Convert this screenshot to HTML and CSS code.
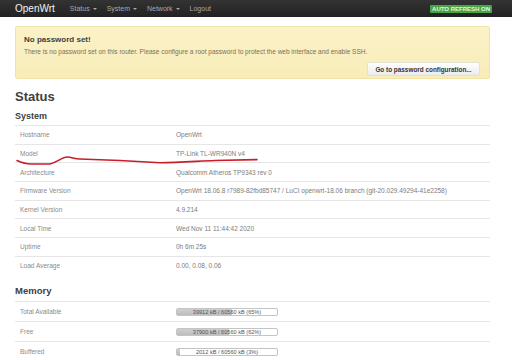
FILE: index.html
```html
<!DOCTYPE html>
<html>
<head>
  <meta charset="UTF-8">
  <title>OpenWrt - Status</title>
  <link rel="stylesheet" href="styles.css">
</head>
<body>
  <header class="navbar">
    <a class="brand" href="#">OpenWrt</a>
    <ul class="nav">
      <li>Status <span class="caret"></span></li>
      <li>System <span class="caret"></span></li>
      <li>Network <span class="caret"></span></li>
      <li>Logout</li>
    </ul>
    <span class="badge">AUTO REFRESH ON</span>
  </header>

  <div class="container">
    <div class="alert">
      <h4>No password set!</h4>
      <p>There is no password set on this router. Please configure a root password to protect the web interface and enable SSH.</p>
      <div class="alert-actions">
        <button type="button" class="btn">Go to password configuration...</button>
      </div>
    </div>

    <h2>Status</h2>

    <h3>System</h3>
    <table class="info sys">
      <tr><td>Hostname</td><td>OpenWrt</td></tr>
      <tr><td>Model</td><td>TP-Link TL-WR940N v4</td></tr>
      <tr><td>Architecture</td><td>Qualcomm Atheros TP9343 rev 0</td></tr>
      <tr><td>Firmware Version</td><td>OpenWrt 18.06.8 r7989-82fbd85747 / LuCI openwrt-18.06 branch (git-20.029.49294-41e2258)</td></tr>
      <tr><td>Kernel Version</td><td>4.9.214</td></tr>
      <tr><td>Local Time</td><td>Wed Nov 11 11:44:42 2020</td></tr>
      <tr><td>Uptime</td><td>0h 6m 25s</td></tr>
      <tr><td>Load Average</td><td>0.00, 0.08, 0.06</td></tr>
    </table>

    <h3 class="mem-title">Memory</h3>
    <table class="info mem">
      <tr><td>Total Available</td><td><div class="bar"><div class="fill" style="width:55%"></div><span>39912 kB / 60560 kB (65%)</span></div></td></tr>
      <tr><td>Free</td><td><div class="bar"><div class="fill" style="width:52%"></div><span>37900 kB / 60560 kB (62%)</span></div></td></tr>
      <tr><td>Buffered</td><td><div class="bar"><div class="fill" style="width:3%"></div><span>2012 kB / 60560 kB (3%)</span></div></td></tr>
    </table>
  </div>

  <!-- hand-drawn underline over the Model row -->
  <svg class="scribble" width="512" height="360" viewBox="0 0 512 360">
    <path d="M17,160.5 C22,163 26,164 32,164 L50,164 C58,162 62,157 67,157 C72,157 74,159 80,159 L120,160.5 L160,162.8 C180,162.5 200,161 215,160.5 L257,159.6" fill="none" stroke="#c81e2a" stroke-width="1.6" stroke-linecap="round"/>
  </svg>
</body>
</html>
```

FILE: styles.css
```css
body { margin: 0; font-family: "Liberation Sans", Arial, sans-serif; background: #fff; color: #404040; position: relative; }

.navbar { display: flex; align-items: center; height: 17px; padding: 0 20px 0 15px; background: linear-gradient(#333, #222); }
.brand { color: #f2f2f2; font-size: 10px; text-decoration: none; margin-right: 10px; }
.nav { display: flex; list-style: none; margin: 0; padding: 0; }
.nav li { color: #a8a8a8; font-size: 7px; padding: 0 5px; }
.caret { display: inline-block; width: 0; height: 0; border-left: 2px solid transparent; border-right: 2px solid transparent; border-top: 2px solid #a8a8a8; vertical-align: middle; margin-left: 1px; }
.badge { margin-left: auto; background: #46a546; color: #e8f5e0; font-size: 6px; font-weight: bold; padding: 1px 2px; border-radius: 1px; }

.container { padding: 0 22px 0 15px; }

.alert { margin-top: 9px; height: 53px; box-sizing: border-box; padding: 8px 9px 0 8px; background: linear-gradient(#fbf2c8, #f8ecb8); border: 1px solid #f2e2a8; border-radius: 2px; }
.alert h4 { margin: 0; font-size: 8px; color: #404040; line-height: 10px; }
.alert p { margin: 3px 0 0; font-size: 6.5px; color: #7a7054; line-height: 8px; }
.alert-actions { text-align: right; margin-top: 2px; }
.btn { font-family: inherit; font-size: 6.4px; font-weight: bold; color: #333; padding: 3px 5px; height: 14px; width: 113px; border: 1px solid #e4e0d4; border-radius: 2px; background: linear-gradient(#fff, #ececec); }

h2 { margin: 10px 0 5px; font-size: 13px; line-height: 16px; color: #404040; }
h3 { margin: 0 0 3px; font-size: 9px; line-height: 12px; color: #404040; }
.mem-title { margin: 10px 0 4px; font-size: 9.5px; }

.info { width: 100%; border-collapse: collapse; font-size: 6.5px; }
.info td { border-top: 1px solid #e6e6e6; padding: 0 5px; color: #7c7c7c; white-space: nowrap; }
.info td:first-child { width: 151px; color: #8a8a8a; }
.info td:last-child { padding-left: 0; }
.sys tr { height: 18.7px; }
.mem tr { height: 20px; }

.bar { position: relative; width: 100px; height: 6px; border: 1px solid #c4c4c4; border-radius: 2px; background: #fff; }
.fill { height: 100%; background: linear-gradient(#cfcfcf, #bdbdbd); }
.bar span { position: absolute; left: 0; right: 0; top: 0; text-align: center; font-size: 5.6px; line-height: 6px; color: #555; }

.scribble { position: absolute; left: 0; top: 0; pointer-events: none; }
```
